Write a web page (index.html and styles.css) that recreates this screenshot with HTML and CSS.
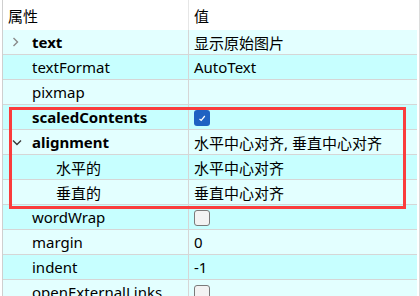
FILE: index.html
```html
<!DOCTYPE html>
<html lang="zh-CN">
<head>
  <meta charset="UTF-8" />
  <title>属性编辑器</title>
  <link rel="stylesheet" href="styles.css">
</head>
<body>
  <div class="panel">
    <div class="tree">
      <div class="header">
        <div class="hcell hname">属性</div>
        <div class="hcell hvalue">值</div>
      </div>

      <div class="row light">
        <div class="name"><span class="toggle"><svg width="7" height="10" viewBox="0 0 7 10"><polyline points="1.5,1 5.5,5 1.5,9" fill="none" stroke="#8a8a8a" stroke-width="1.4"/></svg></span><b>text</b></div>
        <div class="value">显示原始图片</div>
      </div>
      <div class="row dark">
        <div class="name"><span class="toggle"></span>textFormat</div>
        <div class="value">AutoText</div>
      </div>
      <div class="row light">
        <div class="name"><span class="toggle"></span>pixmap</div>
        <div class="value"></div>
      </div>
      <div class="row dark">
        <div class="name"><span class="toggle"></span><b>scaledContents</b></div>
        <div class="value">
          <span class="check on"><svg width="16" height="16" viewBox="0 0 16 16"><polyline points="5.5,9 7.2,10.4 10.8,6" fill="none" stroke="#ffffff" stroke-width="1.2"/></svg></span>
        </div>
      </div>
      <div class="row light">
        <div class="name"><span class="toggle"><svg width="10" height="7" viewBox="0 0 10 7"><polyline points="1,1.5 5,5.5 9,1.5" fill="none" stroke="#3a3a3a" stroke-width="1.4"/></svg></span><b>alignment</b></div>
        <div class="value">水平中心对齐, 垂直中心对齐</div>
      </div>
      <div class="row dark">
        <div class="name child"><span class="toggle"></span>水平的</div>
        <div class="value">水平中心对齐</div>
      </div>
      <div class="row light">
        <div class="name child"><span class="toggle"></span>垂直的</div>
        <div class="value">垂直中心对齐</div>
      </div>
      <div class="row dark">
        <div class="name"><span class="toggle"></span>wordWrap</div>
        <div class="value"><span class="check"></span></div>
      </div>
      <div class="row light">
        <div class="name"><span class="toggle"></span>margin</div>
        <div class="value">0</div>
      </div>
      <div class="row dark">
        <div class="name"><span class="toggle"></span>indent</div>
        <div class="value">-1</div>
      </div>
      <div class="row light">
        <div class="name"><span class="toggle"></span>openExternalLinks</div>
        <div class="value"><span class="check"></span></div>
      </div>
    </div>

    <div class="highlight"></div>
  </div>
</body>
</html>
```

FILE: styles.css
```css
body {
  margin: 0;
  background: #ffffff;
  color: #000;
  font-family: "Noto Sans", "Noto Sans CJK SC", sans-serif;
  font-size: 15px;
}

.panel {
  position: relative;
  width: 420px;
  height: 296px;
  box-sizing: border-box;
  padding: 0 2px 0 2px;
  border-right: 1px solid #dadada;
  overflow: hidden;
  background: #ffffff;
}

.tree {
  height: 100%;
  border-left: 1px solid #cfcfcf;
}

.header {
  display: grid;
  grid-template-columns: 186px 1fr;
  height: 30px;
  background: #ffffff;
}

.hcell {
  display: flex;
  align-items: center;
}

.hname {
  padding-left: 5px;
  border-right: 1px solid #e6e6e6;
}

.hvalue {
  padding-left: 5px;
}

.row {
  display: grid;
  grid-template-columns: 186px 1fr;
  height: 24px;
  border-bottom: 1px solid #d6d6d6;
}

.row.light {
  background: #e3ffff;
}

.row.dark {
  background: #c7ffff;
}

.name {
  display: flex;
  align-items: center;
  border-right: 1px solid #d6d6d6;
  white-space: nowrap;
}

.name.child {
  padding-left: 24px;
}

.toggle {
  display: flex;
  align-items: center;
  width: 20px;
  height: 24px;
  padding-left: 9px;
}

.value {
  display: flex;
  align-items: center;
  padding-left: 5px;
  white-space: nowrap;
}

.check {
  display: block;
  width: 16px;
  height: 16px;
  box-sizing: border-box;
  margin-top: 1px;
  border: 1px solid #7a7a7a;
  border-radius: 3px;
  background: #f3f3f3;
}

.check.on {
  border: none;
  background: #1f62c2;
}

.check svg {
  display: block;
}

.highlight {
  position: absolute;
  left: 9px;
  top: 107px;
  width: 397px;
  height: 102px;
  box-sizing: border-box;
  border: 3px solid #fa3c3c;
}
```
